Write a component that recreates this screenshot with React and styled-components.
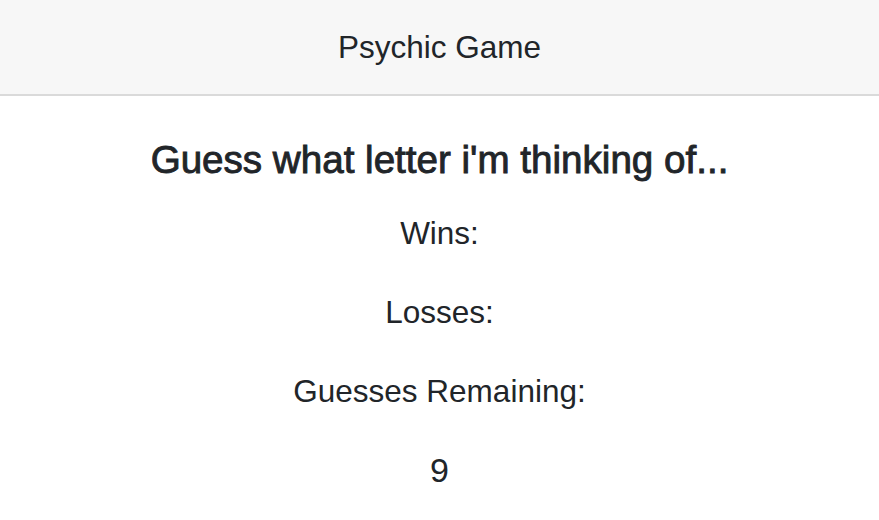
import styled, { createGlobalStyle } from "styled-components";

const GlobalStyle = createGlobalStyle`
  body {
    margin: 0;
    background: #ffffff;
    font-family: "Liberation Sans", Arial, Helvetica, sans-serif;
    color: #212529;
  }
`;

const Header = styled.header`
  height: 94px;
  display: flex;
  align-items: center;
  justify-content: center;
  background-color: #f7f7f7;
  border-bottom: 2px solid #dadada;
  font-size: 31.5px;
`;

const Main = styled.main`
  display: flex;
  flex-direction: column;
  align-items: center;
  padding-top: 41px;
`;

const Title = styled.h1`
  margin: 0 0 11px;
  font-size: 38.6px;
  line-height: 46px;
  font-weight: 400;
  -webkit-text-stroke: 0.9px currentColor;
`;

const Stat = styled.p`
  margin: 0;
  height: 79px;
  line-height: 79px;
  font-size: ${(props) => (props.big ? "34px" : "31.5px")};
`;

export default function App() {
  const stats = ["Wins:", "Losses:", "Guesses Remaining:"];

  return (
    <>
      <GlobalStyle />
      <Header>Psychic Game</Header>
      <Main>
        <Title>Guess what letter i'm thinking of...</Title>
        {stats.map((label) => (
          <Stat key={label}>{label}</Stat>
        ))}
        <Stat big>9</Stat>
      </Main>
    </>
  );
}
